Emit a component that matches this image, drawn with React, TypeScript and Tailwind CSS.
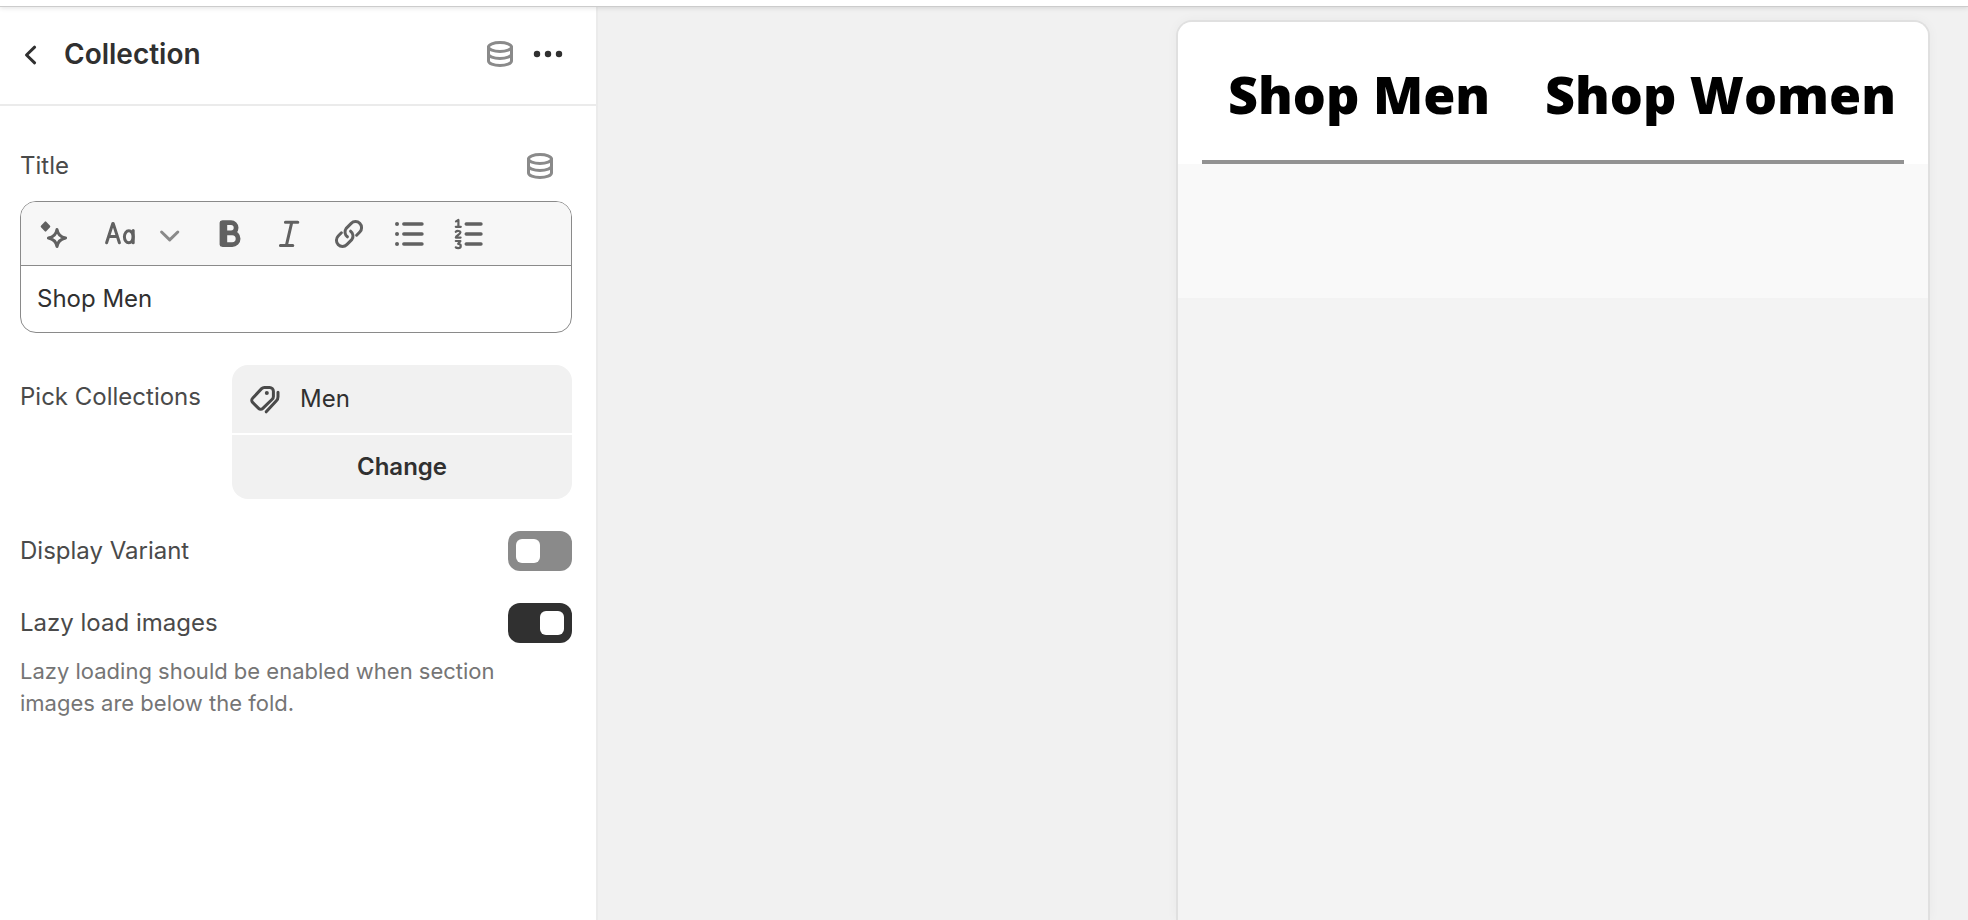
import type { ReactNode } from "react";

type IconProps = { className?: string; children: ReactNode };

function Icon({ className = "", children }: IconProps) {
  return (
    <svg
      viewBox="0 0 20 20"
      className={`size-10 shrink-0 ${className}`}
      fill="none"
      stroke="currentColor"
      strokeWidth="1.5"
      strokeLinecap="round"
      strokeLinejoin="round"
      aria-hidden="true"
    >
      {children}
    </svg>
  );
}

function DatabaseIcon() {
  return (
    <Icon className="text-[#8a8a8a]">
      <ellipse cx="10" cy="6.5" rx="5.75" ry="2.25" />
      <path d="M4.25 6.5v7c0 1.24 2.57 2.25 5.75 2.25s5.75-1.01 5.75-2.25v-7" />
      <path d="M4.25 10c0 1.24 2.57 2.25 5.75 2.25s5.75-1.01 5.75-2.25" />
    </Icon>
  );
}

function ToolButton({ label, children }: { label: string; children: ReactNode }) {
  return (
    <button type="button" aria-label={label} className="text-[#616161]">
      <Icon>{children}</Icon>
    </button>
  );
}

function Toolbar() {
  return (
    <div className="flex h-16 items-center border-b border-[#8a8a8a] bg-[#f7f7f7] pt-px pl-[13px]">
      <ToolButton label="Generate text">
        <path
          d="M5.75 4.2l1.9 2.05-1.9 2.05-1.9-2.05z"
          fill="currentColor"
          strokeWidth="1"
        />
        <path d="M11.5 7.7c.4 2.5 1.6 3.8 4.3 4.3-2.7.5-3.9 1.8-4.3 4.3-.4-2.5-1.6-3.8-4.3-4.3 2.7-.5 3.9-1.8 4.3-4.3z" />
      </ToolButton>
      <button type="button" aria-label="Text format" className="ml-[26px] flex gap-2.5 text-[#616161]">
        <Icon>
          <path d="M3.3 14.4 6.4 4.7h.2l3.1 9.7M4.3 11.3h4.4" />
          <ellipse cx="14.4" cy="11.4" rx="2.2" ry="3" />
          <path d="M16.6 8.3v6.1" />
        </Icon>
        <Icon className="text-[#8a8a8a]">
          <path d="m5.8 9 4.05 3.9L13.9 9" />
        </Icon>
      </button>
      <div className="ml-[19px] flex gap-5">
        <ToolButton label="Bold">
          <path
            d="M6.8 4.3h4.2a2.5 2.5 0 0 1 0 5.1H8M8 9.4h3.6a2.95 2.95 0 0 1 0 5.9H6.8M6.5 4.4v10.8M7.9 4.4v10.8"
            strokeWidth="2.4"
          />
        </ToolButton>
        <ToolButton label="Italic">
          <path d="M8.2 4.1h6.2M5.7 15.7h6.2M11.4 4.1 8.7 15.7" />
        </ToolButton>
        <ToolButton label="Link">
          <path d="M13.8 10.6 15.4 9a3 3 0 0 0-4.3-4.3L8.6 7.2a3 3 0 0 0 .6 4.2" />
          <path d="M6.2 9.4 4.6 11a3 3 0 0 0 4.3 4.3l2.5-2.5a3 3 0 0 0-.6-4.2" />
        </ToolButton>
        <ToolButton label="Bulleted list">
          <path d="M7.4 5h9.1M7.4 10h9.1M7.4 15h9.1" strokeWidth="1.7" />
          <path d="M4 5h.01M4 10h.01M4 15h.01" strokeWidth="2" />
        </ToolButton>
        <ToolButton label="Numbered list">
          <path d="M8.6 5h7.4M8.6 10h7.4M8.6 15h7.4" strokeWidth="1.7" />
          <path
            d="M3.5 3.7l1.2-.7v3.4M3.4 6.4h2.5M3.4 8.9c.5-.6 2.3-.6 2.3.4 0 1-2.3 1.4-2.3 2.5h2.4M3.4 13.5h2.3l-1.1 1.4c1.7 0 1.7 2.2 0 2.2-.5 0-.9-.1-1.2-.4"
            strokeWidth="1.1"
          />
        </ToolButton>
      </div>
    </div>
  );
}

function Switch({ id, defaultChecked = false }: { id: string; defaultChecked?: boolean }) {
  return (
    <input
      id={id}
      type="checkbox"
      role="switch"
      defaultChecked={defaultChecked}
      className="flex h-10 w-16 shrink-0 appearance-none items-center rounded-xl bg-[#8a8a8a] px-2 before:size-6 before:rounded-md before:bg-white checked:justify-end checked:bg-[#303030]"
    />
  );
}

function SettingsPanel() {
  return (
    <aside className="w-[598px] shrink-0 border-r-2 border-[#ebebeb] bg-white text-2xl text-[#4a4a4a]">
      <header className="flex h-[99px] items-center border-b-2 border-[#ebebeb] pr-7 pb-[3px] pl-2.5">
        <button type="button" aria-label="Back" className="text-[#303030]">
          <Icon>
            <path d="m12.3 6.6-4.05 3.9 4.05 3.9" />
          </Icon>
        </button>
        <h1 className="ml-3.5 flex-1 pt-0.5 text-[28px] font-semibold text-[#303030]">Collection</h1>
        <button type="button" aria-label="Connect dynamic source">
          <DatabaseIcon />
        </button>
        <button type="button" aria-label="More actions" className="ml-2 text-[#303030]">
          <Icon>
            <path d="M4.5 10h.01M10 10h.01M15.5 10h.01" strokeWidth="3.2" />
          </Icon>
        </button>
      </header>

      <form className="pt-10 pr-6 pl-5">
        <div className="flex items-center justify-between pr-3">
          <label htmlFor="title">Title</label>
          <button type="button" aria-label="Connect title to a dynamic source">
            <DatabaseIcon />
          </button>
        </div>
        <div className="mt-[15px] overflow-hidden rounded-2xl border border-[#8a8a8a]">
          <Toolbar />
          <input
            id="title"
            type="text"
            defaultValue="Shop Men"
            className="block h-[66px] w-full px-4 pb-0.5 text-[#303030] outline-none"
          />
        </div>

        <div className="mt-8 flex justify-between">
          <span className="pt-4">Pick Collections</span>
          <div className="flex w-[340px] flex-col gap-0.5 overflow-hidden rounded-2xl text-[#303030]">
            <div className="flex h-[68px] items-center gap-4 bg-[#f1f1f1] px-3">
              <Icon className="text-[#4a4a4a]">
                <path d="M10.2 4.2h2.6a1.9 1.9 0 0 1 1.9 1.9v2.6a2 2 0 0 1-.6 1.4l-4.7 4.6a1.5 1.5 0 0 1-2.1 0l-3-3a1.5 1.5 0 0 1 0-2.1l4.5-4.8a2 2 0 0 1 1.4-.6z" />
                <path d="M17 6.6v2.3c0 .8-.3 1.5-.8 2l-5.1 5.5" />
                <path d="M11.4 7h.01" strokeWidth="2" />
              </Icon>
              <span>Men</span>
            </div>
            <button type="button" className="h-16 bg-[#f1f1f1] font-semibold">
              Change
            </button>
          </div>
        </div>

        <div className="mt-8 flex items-center justify-between">
          <label htmlFor="display-variant">Display Variant</label>
          <Switch id="display-variant" />
        </div>

        <div className="mt-8 flex items-center justify-between">
          <label htmlFor="lazy-load">Lazy load images</label>
          <Switch id="lazy-load" defaultChecked />
        </div>
        <p className="mt-3 max-w-[500px] text-[22px] leading-8 text-[#757575]">
          Lazy loading should be enabled when section images are below the fold.
        </p>
      </form>
    </aside>
  );
}

function Preview() {
  return (
    <main className="flex flex-1 justify-end bg-[#f1f1f1] pt-[13px] pr-[38px]">
      <section className="w-[754px] overflow-hidden rounded-t-2xl border-2 border-b-0 border-[#e0e0e0] bg-[#f3f3f3] shadow-[0_0_12px_rgba(0,0,0,0.04)]">
        <div className="bg-white px-6">
          <nav className="flex h-[142px] items-center justify-between border-b-4 border-[#929292] pt-1.5 pr-2 pl-[26px] font-['Gill_Sans','Open_Sans',sans-serif] text-[52px] font-extrabold text-black">
            <a href="#men">Shop Men</a>
            <a href="#women">Shop Women</a>
          </nav>
        </div>
        <div className="h-[134px] bg-[#f9f9f9]" />
      </section>
    </main>
  );
}

export default function App() {
  return (
    <div className="flex min-h-screen flex-col bg-white font-['Inter',sans-serif] [font-optical-sizing:none]">
      <div className="relative h-[7px] border-b border-[#cccccc] bg-white shadow-[0_1px_5px_rgba(0,0,0,0.12)]" />
      <div className="flex flex-1">
        <SettingsPanel />
        <Preview />
      </div>
    </div>
  );
}
